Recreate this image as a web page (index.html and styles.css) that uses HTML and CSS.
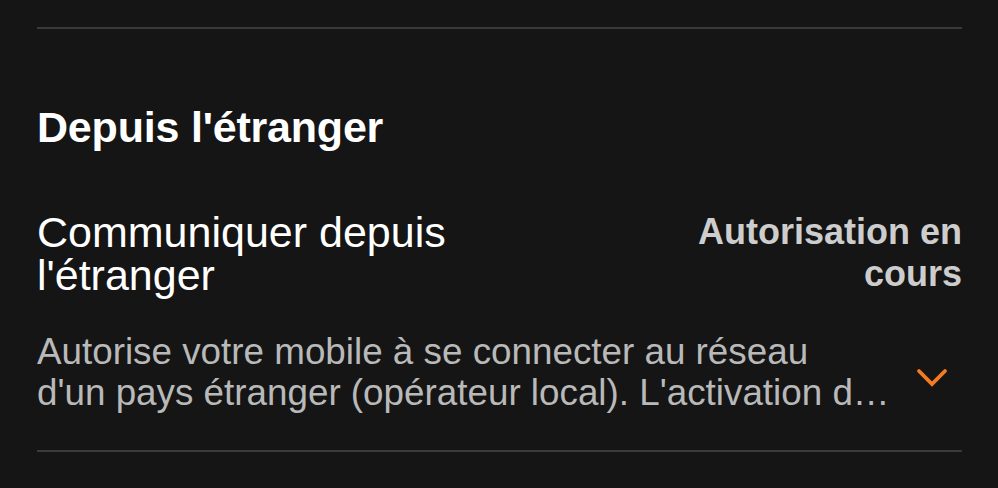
FILE: index.html
```html
<!DOCTYPE html>
<html lang="fr">
<head>
<meta charset="utf-8">
<title>Depuis l'étranger</title>
<link rel="stylesheet" href="styles.css">
</head>
<body>
<main class="panel">
  <div class="divider divider-top"></div>
  <h2 class="section-title">Depuis l'étranger</h2>
  <div class="option">
    <div class="option-head">
      <div class="option-name">Communiquer depuis l'étranger</div>
      <div class="option-status">Autorisation en cours</div>
    </div>
    <div class="option-body">
      <p class="option-desc">
        <span class="desc-line">Autorise votre mobile à se connecter au réseau</span>
        <span class="desc-line">d'un pays étranger (opérateur local). L'activation d…</span>
      </p>
      <svg class="chevron" width="32" height="20" viewBox="0 0 32 20" aria-hidden="true">
        <polyline points="3,3 16,16 29,3" fill="none" stroke="#f47b20" stroke-width="3.8" stroke-linecap="round" stroke-linejoin="miter"/>
      </svg>
    </div>
  </div>
  <div class="divider divider-bottom"></div>
</main>
</body>
</html>
```

FILE: styles.css
```css
html, body {
  margin: 0;
  padding: 0;
  background: #151515;
}

body {
  font-family: "Liberation Sans", Arial, Helvetica, sans-serif;
  color: #ffffff;
  width: 998px;
  height: 488px;
  overflow: hidden;
}

.panel {
  display: flex;
  flex-direction: column;
  padding: 0 36px 0 37px;
}

.divider {
  height: 2px;
  background: #3a3a3a;
}

.divider-top {
  margin-top: 27px;
}

.section-title {
  margin: 74px 0 0 0;
  font-size: 43px;
  line-height: 48px;
  font-weight: 700;
  color: #ffffff;
  letter-spacing: -0.2px;
}

.option {
  display: flex;
  flex-direction: column;
  margin-top: 60px;
}

.option-head {
  display: flex;
  justify-content: space-between;
  align-items: flex-start;
}

.option-name {
  max-width: 480px;
  font-size: 43px;
  line-height: 43px;
  font-weight: 400;
  color: #ffffff;
}

.option-status {
  width: 280px;
  text-align: right;
  font-size: 36px;
  line-height: 42px;
  font-weight: 700;
  color: #cdcdcd;
}

.option-body {
  display: flex;
  align-items: center;
  justify-content: space-between;
  margin-top: 34px;
}

.option-desc {
  margin: 0;
  display: flex;
  flex-direction: column;
  font-size: 36.8px;
  line-height: 41px;
  color: #b9b9b9;
}

.desc-line {
  display: block;
  white-space: nowrap;
}

.chevron {
  margin-right: 14px;
  margin-top: 12px;
  flex: 0 0 auto;
}

.divider-bottom {
  margin-top: 37px;
}
```
